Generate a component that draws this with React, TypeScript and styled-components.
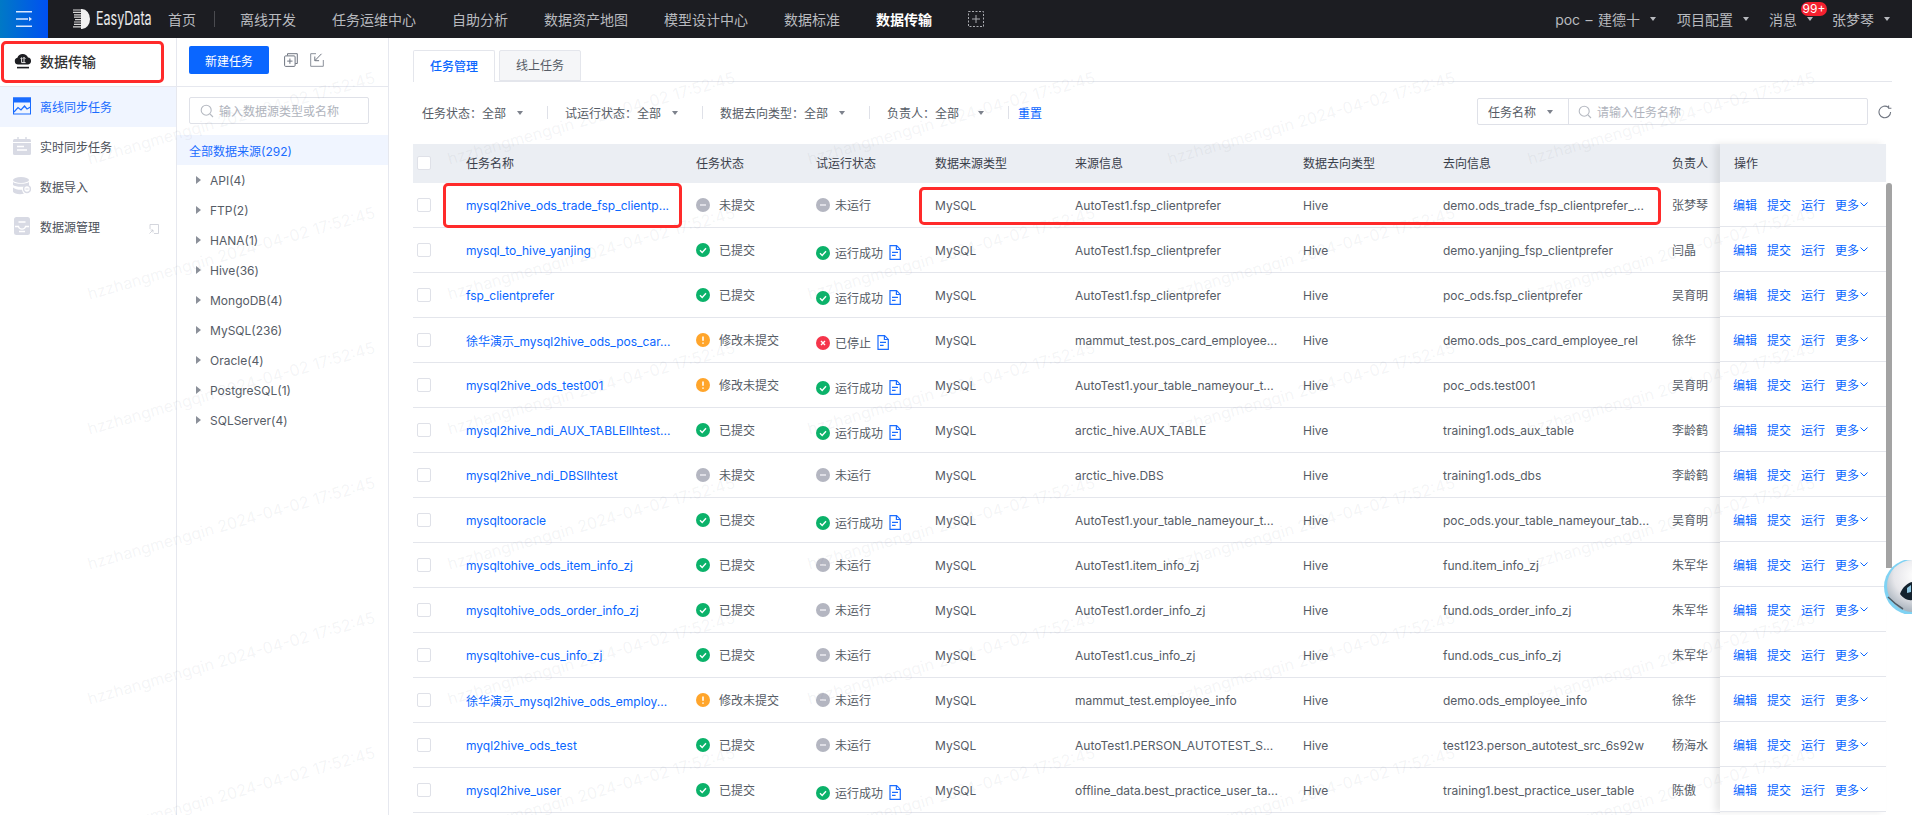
import styled, { createGlobalStyle } from "styled-components";

const GlobalStyle = createGlobalStyle`
  html, body {
    margin: 0;
    padding: 0;
    background: #fff;
    font-family: Inter, "Noto Sans CJK SC", sans-serif;
    font-size: 12px;
    color: #565c66;
  }
  * {
    box-sizing: border-box;
  }
`;

const Page = styled.div`
  position: relative;
  width: 100%;
  height: 100vh;
  overflow: hidden;
  display: flex;
  flex-direction: column;
`;

const TopBar = styled.header`
  position: relative;
  z-index: 3;
  flex: none;
  height: 38px;
  display: flex;
  align-items: center;
  background: #1c1d22;
  color: #b8babf;
  font-size: 14px;
`;

const MenuButton = styled.div`
  width: 48px;
  height: 38px;
  display: flex;
  align-items: center;
  justify-content: center;
  background: linear-gradient(90deg, #0079c6, #0050f2);
`;

const Logo = styled.div`
  width: 79px;
  margin-left: 25px;
  display: flex;
  align-items: center;
  gap: 6px;
`;

const LogoText = styled.span`
  display: inline-block;
  color: #e9e9ea;
  font-size: 19px;
  line-height: 38px;
  transform: scaleX(0.66);
  transform-origin: left center;
  white-space: nowrap;
`;

const NavItem = styled.span<{ $active?: boolean }>`
  margin-right: 36px;
  white-space: nowrap;
  color: ${(p) => (p.$active ? "#fff" : "#b8babf")};
  font-weight: ${(p) => (p.$active ? 700 : 400)};
`;

const HomeItem = styled(NavItem)`
  margin-left: 16px;
  margin-right: 18px;
`;

const NavDivider = styled.i`
  width: 1px;
  height: 16px;
  margin-right: 25px;
  background: #4a4b50;
`;

const RightMenu = styled.div`
  margin-left: auto;
  padding-right: 22px;
  display: flex;
  align-items: center;
`;

const MenuEntry = styled.div<{ $gap: number }>`
  position: relative;
  display: flex;
  align-items: center;
  gap: 10px;
  margin-right: ${(p) => p.$gap}px;
  white-space: nowrap;
`;

const ProjectName = styled.span`
  word-spacing: 1.5px;
`;

const Badge = styled.span`
  position: absolute;
  left: 32px;
  top: -7px;
  width: 26px;
  height: 14px;
  border-radius: 7px;
  background: #f5212f;
  color: #fff;
  font-size: 12px;
  line-height: 14px;
  text-align: center;
`;

const Caret = styled.i<{ $color?: string; $gap?: number }>`
  flex: none;
  display: inline-block;
  margin-left: ${(p) => p.$gap ?? 0}px;
  border-left: 3px solid transparent;
  border-right: 3px solid transparent;
  border-top: 4px solid ${(p) => p.$color ?? "#7d828c"};
`;

const Body = styled.div`
  flex: 1;
  min-height: 0;
  display: flex;
`;

const Sidebar = styled.aside`
  flex: none;
  width: 177px;
  border-right: 1px solid #e6e8ef;
`;

const SideHeader = styled.div`
  position: relative;
  height: 49px;
  padding: 0 0 2px 14px;
  display: flex;
  align-items: center;
  gap: 8px;
  border-bottom: 1px solid #e6e8ef;
  color: #333;
  font-size: 14px;
  font-weight: 500;
`;

const SideItem = styled.div<{ $active?: boolean }>`
  position: relative;
  height: 40px;
  padding: 0 0 2px 13px;
  display: flex;
  align-items: center;
  gap: 9px;
  background: ${(p) => (p.$active ? "#f0f5ff" : "transparent")};
  color: ${(p) => (p.$active ? "#1a6cff" : "#4b5059")};
`;

const ExpandMark = styled.svg`
  position: absolute;
  right: 17px;
  top: 17px;
`;

const Annotation = styled.div<{ $left: number; $top: number; $width: number; $height: number }>`
  position: absolute;
  z-index: 2;
  left: ${(p) => p.$left}px;
  top: ${(p) => p.$top}px;
  width: ${(p) => p.$width}px;
  height: ${(p) => p.$height}px;
  border: 3px solid #ff2a2a;
  border-radius: 5px;
  pointer-events: none;
`;

const SourcePanel = styled.section`
  flex: none;
  width: 212px;
  border-right: 1px solid #e6e8ef;
`;

const PanelToolbar = styled.div`
  height: 49px;
  padding: 0 0 0 12px;
  display: flex;
  align-items: center;
  gap: 15px;
  border-bottom: 1px solid #e6e8ef;
`;

const PrimaryButton = styled.button`
  width: 80px;
  height: 28px;
  margin-top: -4px;
  border: 0;
  border-radius: 2px;
  background: #0a66ff;
  color: #fff;
  font: inherit;
`;

const ToolIcon = styled.svg<{ $pull?: number }>`
  flex: none;
  margin-top: -5px;
  margin-left: ${(p) => p.$pull ?? 0}px;
`;

const PanelSearch = styled.div`
  width: 180px;
  height: 27px;
  margin: 10px 0 11px 12px;
  padding-left: 10px;
  display: flex;
  align-items: center;
  gap: 5px;
  border: 1px solid #dfe1e8;
  border-radius: 2px;
  color: #b0b4bd;
`;

const AllSources = styled.div`
  height: 30px;
  padding-left: 12px;
  display: flex;
  align-items: center;
  background: #f0f5ff;
  color: #1a6cff;
`;

const TreeRow = styled.div`
  height: 30px;
  padding-left: 19px;
  display: flex;
  align-items: center;
  gap: 9px;
  color: #565c66;
`;

const TreeArrow = styled.i`
  border-top: 4px solid transparent;
  border-bottom: 4px solid transparent;
  border-left: 5px solid #8b9099;
`;

const Main = styled.main`
  flex: 1;
  min-width: 0;
  padding: 12px 20px 0 24px;
`;

const Tabs = styled.div`
  height: 32px;
  display: flex;
  gap: 4px;
  border-bottom: 1px solid #e4e6ec;
`;

const Tab = styled.div<{ $active?: boolean }>`
  width: 82px;
  height: ${(p) => (p.$active ? 32 : 31)}px;
  padding-bottom: 2px;
  display: flex;
  align-items: center;
  justify-content: center;
  border: 1px solid #e4e6ec;
  border-bottom: ${(p) => (p.$active ? "0" : "1px solid #e4e6ec")};
  border-radius: 2px 2px 0 0;
  background: ${(p) => (p.$active ? "#fff" : "#f5f6f8")};
  color: ${(p) => (p.$active ? "#0a66ff" : "#565c66")};
  font-weight: ${(p) => (p.$active ? 500 : 400)};
`;

const FilterBar = styled.div`
  height: 27px;
  margin-top: 16px;
  padding-left: 9px;
  display: flex;
  align-items: center;
`;

const FilterItem = styled.div`
  display: flex;
  align-items: center;
  padding-top: 2px;
  white-space: nowrap;
`;

const FilterDivider = styled.i<{ $after?: number }>`
  width: 1px;
  height: 13px;
  margin: 2px ${(p) => p.$after ?? 17}px 0 24px;
  background: #dfe1e8;
`;

const ResetLink = styled.a`
  padding-top: 2px;
  color: #0a66ff;
`;

const SearchGroup = styled.div`
  margin-left: auto;
  height: 27px;
  width: 391px;
  display: flex;
  border: 1px solid #dfe1e8;
  border-radius: 2px;
`;

const SearchType = styled.div`
  width: 91px;
  padding-left: 10px;
  display: flex;
  align-items: center;
  gap: 11px;
  border-right: 1px solid #dfe1e8;
`;

const SearchInput = styled.div`
  flex: 1;
  padding-left: 9px;
  display: flex;
  align-items: center;
  gap: 5px;
  color: #b0b4bd;
`;

const RefreshIcon = styled.svg`
  flex: none;
  margin-left: 10px;
`;

const TableWrap = styled.div`
  margin-top: 19px;
  display: flex;
  align-items: flex-start;
`;

const DataTable = styled.div`
  flex: none;
  width: 1307px;
`;

const columns = "41px 230px 120px 119px 140px 228px 140px 229px 60px";

const HeadRow = styled.div`
  height: 39px;
  padding-bottom: 2px;
  display: grid;
  grid-template-columns: ${columns};
  align-items: center;
  background: #ebeef3;
  color: #3a404b;
`;

const Row = styled.div`
  position: relative;
  height: 45px;
  display: grid;
  grid-template-columns: ${columns};
  align-items: center;
  border-bottom: 1px solid #e4e6ec;
`;

const Cell = styled.div`
  padding-left: 12px;
  overflow: hidden;
  white-space: nowrap;
  text-overflow: ellipsis;
`;

const LinkCell = styled(Cell)`
  color: #0a66ff;
`;

const OwnerCell = styled(Cell)`
  padding-bottom: 2px;
`;

const CheckCell = styled.div`
  padding-left: 4px;
  display: flex;
  align-items: center;
`;

const Checkbox = styled.span`
  width: 14px;
  height: 14px;
  border: 1px solid #dfe1e8;
  border-radius: 2px;
  background: #fff;
`;

const StatusCell = styled(Cell)`
  display: flex;
  align-items: center;
  gap: 9px;
`;

const TrialCell = styled(Cell)<{ $shift: boolean }>`
  display: flex;
  align-items: center;
  gap: 5px;
  padding-top: ${(p) => (p.$shift ? 6 : 0)}px;
`;

const StatusLabel = styled.span`
  margin-top: -2px;
`;

const DocIcon = styled.svg`
  flex: none;
  margin: -2px 0 0 1px;
`;

const OpsColumn = styled.div`
  position: relative;
  flex: none;
  width: 166px;
  background: #fff;
  box-shadow: -5px 0 7px rgba(0, 0, 0, 0.09);
`;

const OpsHead = styled.div`
  height: 38px;
  padding: 0 0 2px 14px;
  display: flex;
  align-items: center;
  background: #ebeef3;
  color: #3a404b;
`;

const OpsRow = styled.div`
  height: 45px;
  padding-left: 13px;
  display: flex;
  align-items: center;
  gap: 10px;
  border-bottom: 1px solid #e4e6ec;
  color: #0a66ff;
`;

const MoreLink = styled.span`
  display: flex;
  align-items: center;
  gap: 1px;
`;

const ScrollGutter = styled.div`
  flex: none;
  width: 6px;
  padding-top: 39px;
`;

const ScrollThumb = styled.div`
  height: 385px;
  border-radius: 3px 3px 0 0;
  background: #a3a3a3;
`;

const Watermarks = styled.div`
  position: absolute;
  z-index: 1;
  left: 51px;
  top: 50px;
  display: grid;
  grid-template-columns: repeat(5, 360px);
  grid-auto-rows: 135px;
  pointer-events: none;
`;

const Watermark = styled.span`
  display: flex;
  align-items: center;
  justify-content: center;
  white-space: nowrap;
  font-size: 16px;
  color: rgba(110, 115, 130, 0.08);
  transform: rotate(-16deg);
`;

const Assistant = styled.svg`
  position: absolute;
  z-index: 4;
  right: 0;
  top: 560px;
`;

type TaskState = "none" | "ok" | "warn" | "stop";

const StatusIcon = ({ state }: { state: TaskState }) => {
  const fill = { none: "#b4b6c1", ok: "#0bb26a", warn: "#ffa52b", stop: "#f5354b" }[state];
  return (
    <svg width="14" height="14" viewBox="0 0 14 14" style={{ flex: "none" }}>
      <circle cx="7" cy="7" r="7" fill={fill} />
      {state === "ok" && <path d="M4 7.2l2.2 2.2L10 5.2" fill="none" stroke="#fff" strokeWidth="1.4" />}
      {state === "none" && <path d="M4 7h6" stroke="#e9e9ee" strokeWidth="1.6" />}
      {state === "warn" && <path d="M7 3.4v4.4M7 9.4v1.4" stroke="#fff" strokeWidth="1.6" />}
      {state === "stop" && <path d="M5 5l4 4M9 5l-4 4" stroke="#fff" strokeWidth="1.4" />}
    </svg>
  );
};

const Doc = () => (
  <DocIcon width="12" height="15" viewBox="0 0 12 15">
    <path d="M1 .7h6.6L11.3 4.4v9.9H1z" fill="none" stroke="#1a6cff" strokeWidth="1.2" />
    <path d="M7.4.7v3.8h3.9M3 7.4h6M3 10.4h3.6" fill="none" stroke="#1a6cff" strokeWidth="1.2" />
  </DocIcon>
);

const SearchGlass = () => (
  <svg width="14" height="14" viewBox="0 0 14 14" style={{ flex: "none" }}>
    <circle cx="6.2" cy="6.2" r="5" fill="none" stroke="#b6bac2" strokeWidth="1.1" />
    <path d="M10 10l3 3" stroke="#b6bac2" strokeWidth="1.1" />
  </svg>
);

const tree = ["API(4)", "FTP(2)", "HANA(1)", "Hive(36)", "MongoDB(4)", "MySQL(236)", "Oracle(4)", "PostgreSQL(1)", "SQLServer(4)"];

const heads = ["任务名称", "任务状态", "试运行状态", "数据来源类型", "来源信息", "数据去向类型", "去向信息", "负责人"];

const statusText: Record<string, string> = { none: "未提交", ok: "已提交", warn: "修改未提交" };
const trialText: Record<string, string> = { none: "未运行", ok: "运行成功", stop: "已停止" };

const tasks: [string, TaskState, TaskState, string, string, string][] = [
  ["mysql2hive_ods_trade_fsp_clientp...", "none", "none", "AutoTest1.fsp_clientprefer", "demo.ods_trade_fsp_clientprefer_...", "张梦琴"],
  ["mysql_to_hive_yanjing", "ok", "ok", "AutoTest1.fsp_clientprefer", "demo.yanjing_fsp_clientprefer", "闫晶"],
  ["fsp_clientprefer", "ok", "ok", "AutoTest1.fsp_clientprefer", "poc_ods.fsp_clientprefer", "吴育明"],
  ["徐华演示_mysql2hive_ods_pos_car...", "warn", "stop", "mammut_test.pos_card_employee...", "demo.ods_pos_card_employee_rel", "徐华"],
  ["mysql2hive_ods_test001", "warn", "ok", "AutoTest1.your_table_nameyour_t...", "poc_ods.test001", "吴育明"],
  ["mysql2hive_ndi_AUX_TABLEllhtest...", "ok", "ok", "arctic_hive.AUX_TABLE", "training1.ods_aux_table", "李龄鹤"],
  ["mysql2hive_ndi_DBSllhtest", "none", "none", "arctic_hive.DBS", "training1.ods_dbs", "李龄鹤"],
  ["mysqltooracle", "ok", "ok", "AutoTest1.your_table_nameyour_t...", "poc_ods.your_table_nameyour_tab...", "吴育明"],
  ["mysqltohive_ods_item_info_zj", "ok", "none", "AutoTest1.item_info_zj", "fund.item_info_zj", "朱军华"],
  ["mysqltohive_ods_order_info_zj", "ok", "none", "AutoTest1.order_info_zj", "fund.ods_order_info_zj", "朱军华"],
  ["mysqltohive-cus_info_zj", "ok", "none", "AutoTest1.cus_info_zj", "fund.ods_cus_info_zj", "朱军华"],
  ["徐华演示_mysql2hive_ods_employ...", "warn", "none", "mammut_test.employee_info", "demo.ods_employee_info", "徐华"],
  ["myql2hive_ods_test", "ok", "none", "AutoTest1.PERSON_AUTOTEST_S...", "test123.person_autotest_src_6s92w", "杨海水"],
  ["mysql2hive_user", "ok", "ok", "offline_data.best_practice_user_ta...", "training1.best_practice_user_table", "陈傲"],
];

const App = () => {
  return (
    <Page>
      <GlobalStyle />
      <TopBar>
        <MenuButton>
          <svg width="16" height="16" viewBox="0 0 16 16">
            <path d="M0 .7h16M0 8h12M0 15.3h16" stroke="#dbe8ff" strokeWidth="1.4" />
            <path d="M13 5.8l3 2.2-3 2.2z" fill="#dbe8ff" />
          </svg>
        </MenuButton>
        <Logo>
          <svg width="17" height="20" viewBox="0 0 17 20" style={{ flex: "none" }}>
            <path d="M8 0h1a8 10 0 0 1 0 20H8z" fill="#f1f1f1" />
            <path d="M0 1h8M0 3.4h8M1 5.8h7M1 8.2h7M2 10.6h6M1 13h7M1 15.4h7M0 17.8h8" stroke="#d9d9d9" strokeWidth="1.2" />
          </svg>
          <LogoText>EasyData</LogoText>
        </Logo>
        <HomeItem>首页</HomeItem>
        <NavDivider />
        <NavItem>离线开发</NavItem>
        <NavItem>任务运维中心</NavItem>
        <NavItem>自助分析</NavItem>
        <NavItem>数据资产地图</NavItem>
        <NavItem>模型设计中心</NavItem>
        <NavItem>数据标准</NavItem>
        <NavItem $active>数据传输</NavItem>
        <svg width="16" height="16" viewBox="0 0 16 16">
          <rect x=".5" y=".5" width="15" height="15" fill="none" stroke="#a9abb0" strokeDasharray="2 1.5" />
          <path d="M4 8h8M8 4v8" stroke="#a9abb0" />
        </svg>
        <RightMenu>
          <MenuEntry $gap={21}>
            <ProjectName>poc – 建德十</ProjectName>
            <Caret $color="#b8babf" />
          </MenuEntry>
          <MenuEntry $gap={20}>
            项目配置
            <Caret $color="#b8babf" />
          </MenuEntry>
          <MenuEntry $gap={19}>
            消息
            <Caret $color="#b8babf" />
            <Badge>99+</Badge>
          </MenuEntry>
          <MenuEntry $gap={0}>
            张梦琴
            <Caret $color="#b8babf" />
          </MenuEntry>
        </RightMenu>
      </TopBar>
      <Body>
        <Sidebar>
          <SideHeader>
            <svg width="18" height="16" viewBox="0 0 18 16">
              <path d="M4 11.5a3.4 3.4 0 0 1-.6-6.7A5.7 5.7 0 0 1 14 4.6a3.5 3.5 0 0 1 .2 6.9z" fill="#1d1e22" />
              <path d="M6.6 5.6l1-1v5M10 9.4V4.4M8.6 5.8L10 4.4l1.4 1.4M7.6 9.6h4" fill="none" stroke="#fff" strokeWidth=".9" />
              <path d="M3 14.6h12" stroke="#1d1e22" strokeWidth="1.6" />
            </svg>
            数据传输
            <Annotation $left={1} $top={3} $width={163} $height={42} />
          </SideHeader>
          <nav>
            <SideItem $active>
              <svg width="18" height="18" viewBox="0 0 18 18">
                <rect x=".5" y="1" width="17" height="16" fill="none" stroke="#1a6cff" />
                <rect x="0" y=".5" width="18" height="5" fill="#1a6cff" />
                <path d="M1 15l4-4.5 3 2.5 3.5-4 2.5 3 3.5-2" fill="none" stroke="#1a6cff" strokeWidth="1.2" />
              </svg>
              离线同步任务
            </SideItem>
            <SideItem>
              <svg width="18" height="18" viewBox="0 0 18 18">
                <path d="M5 0v3M13 0v3" stroke="#d8dae4" strokeWidth="1.4" />
                <rect x="0" y="2" width="18" height="16" rx="1.5" fill="#d8dae4" />
                <path d="M0 5.5h18" stroke="#fff" />
                <path d="M4 9.5h7M4 13h10" stroke="#fff" strokeWidth="1.4" />
              </svg>
              实时同步任务
            </SideItem>
            <SideItem>
              <svg width="18" height="18" viewBox="0 0 18 18">
                <ellipse cx="8" cy="3" rx="8" ry="3" fill="#d8dae4" />
                <path d="M0 5c2 2.4 14 2.4 16 0v3c-2 2.4-14 2.4-16 0zM0 10.5c2 2 6 2.4 9 2.2.3 1.6 1 3 2 4-4 1-10 .4-11-2z" fill="#d8dae4" />
                <circle cx="14" cy="12" r="3.4" fill="#fff" stroke="#d8dae4" strokeWidth="1.5" />
                <path d="M15.5 12h-3" stroke="#d8dae4" />
              </svg>
              数据导入
            </SideItem>
            <SideItem>
              <svg width="18" height="18" viewBox="0 0 18 18">
                <rect x="1" y="0" width="16" height="18" rx="2.5" fill="#d8dae4" />
                <path d="M5.5 5h7M2 9.5h3.5c.3 2 1.4 2.6 3.5 2.6s3.2-.6 3.5-2.6H16M6 14.5h6" fill="none" stroke="#fff" strokeWidth="1.3" />
              </svg>
              数据源管理
              <ExpandMark width="10" height="10" viewBox="0 0 10 10">
                <path d="M1 5V.5h8.5v9H5M.5 9.5L4 6M1.500 6H4v2.500" fill="none" stroke="#c9ccd4" strokeWidth=".8" />
              </ExpandMark>
            </SideItem>
          </nav>
        </Sidebar>
        <SourcePanel>
          <PanelToolbar>
            <PrimaryButton>新建任务</PrimaryButton>
            <ToolIcon width="14" height="14" viewBox="0 0 14 14">
              <path d="M3.5 2.5V.7h9.8v9.8h-2" fill="none" stroke="#6f7580" />
              <rect x=".6" y="2.9" width="10.5" height="10.5" rx="1" fill="none" stroke="#6f7580" />
              <path d="M3.2 8.1h5.3M5.9 5.5v5.300" stroke="#6f7580" />
            </ToolIcon>
            <ToolIcon $pull={-3} width="14" height="14" viewBox="0 0 14 14">
              <path d="M6 .7H.7v12.600h12.600V7" fill="none" stroke="#8b909a" />
              <path d="M11.500.8L5 7.500M4.800 3.500v4.200h4.300" fill="none" stroke="#6f7580" />
            </ToolIcon>
          </PanelToolbar>
          <PanelSearch>
            <SearchGlass />
            输入数据源类型或名称
          </PanelSearch>
          <AllSources>全部数据来源(292)</AllSources>
          {tree.map((name) => (
            <TreeRow key={name}>
              <TreeArrow />
              {name}
            </TreeRow>
          ))}
        </SourcePanel>
        <Main>
          <Tabs>
            <Tab $active>任务管理</Tab>
            <Tab>线上任务</Tab>
          </Tabs>
          <FilterBar>
            <FilterItem>
              任务状态：全部
              <Caret $gap={11} />
            </FilterItem>
            <FilterDivider />
            <FilterItem>
              试运行状态：全部
              <Caret $gap={11} />
            </FilterItem>
            <FilterDivider />
            <FilterItem>
              数据去向类型：全部
              <Caret $gap={11} />
            </FilterItem>
            <FilterDivider />
            <FilterItem>
              负责人：全部
              <Caret $gap={19} />
            </FilterItem>
            <FilterDivider $after={9} />
            <ResetLink>重置</ResetLink>
            <SearchGroup>
              <SearchType>
                任务名称
                <Caret />
              </SearchType>
              <SearchInput>
                <SearchGlass />
                请输入任务名称
              </SearchInput>
            </SearchGroup>
            <RefreshIcon width="14" height="14" viewBox="0 0 14 14">
              <path d="M12.600 7A5.800 5.800 0 1 1 10.500 2.500" fill="none" stroke="#6f7580" strokeWidth="1.100" />
              <path d="M10.600.5v2.800h2.800" fill="none" stroke="#6f7580" strokeWidth="1.100" />
            </RefreshIcon>
          </FilterBar>
          <TableWrap>
            <DataTable>
              <HeadRow>
                <CheckCell>
                  <Checkbox />
                </CheckCell>
                {heads.map((h) => (
                  <Cell key={h}>{h}</Cell>
                ))}
              </HeadRow>
              {tasks.map(([name, status, trial, source, target, owner], i) => (
                <Row key={name}>
                  <CheckCell>
                    <Checkbox />
                  </CheckCell>
                  <LinkCell>{name}</LinkCell>
                  <StatusCell>
                    <StatusIcon state={status} />
                    <StatusLabel>{statusText[status]}</StatusLabel>
                  </StatusCell>
                  <TrialCell $shift={trial !== "none"}>
                    <StatusIcon state={trial} />
                    <StatusLabel>{trialText[trial]}</StatusLabel>
                    {trial !== "none" && <Doc />}
                  </TrialCell>
                  <Cell>MySQL</Cell>
                  <Cell>{source}</Cell>
                  <Cell>Hive</Cell>
                  <Cell>{target}</Cell>
                  <OwnerCell>{owner}</OwnerCell>
                  {i === 0 && (
                    <>
                      <Annotation $left={30} $top={0} $width={239} $height={45} />
                      <Annotation $left={506} $top={4} $width={742} $height={38} />
                    </>
                  )}
                </Row>
              ))}
            </DataTable>
            <OpsColumn>
              <OpsHead>操作</OpsHead>
              {tasks.map(([name]) => (
                <OpsRow key={name}>
                  <span>编辑</span>
                  <span>提交</span>
                  <span>运行</span>
                  <MoreLink>
                    更多
                    <svg width="8" height="5" viewBox="0 0 8 5">
                      <path d="M.5.5L4 4 7.500.5" fill="none" stroke="#0a66ff" />
                    </svg>
                  </MoreLink>
                </OpsRow>
              ))}
            </OpsColumn>
            <ScrollGutter>
              <ScrollThumb />
            </ScrollGutter>
          </TableWrap>
        </Main>
      </Body>
      <Watermarks>
        {Array.from({ length: 30 }, (_, i) => (
          <Watermark key={i}>hzzhangmengqin 2024-04-02 17:52:45</Watermark>
        ))}
      </Watermarks>
      <Assistant width="29" height="54" viewBox="0 0 29 54">
        <defs>
          <radialGradient id="shell" cx="0.55" cy="0.3" r="0.7">
            <stop offset="0" stopColor="#ffffff" />
            <stop offset="0.6" stopColor="#e6e6ea" />
            <stop offset="1" stopColor="#a9b3bd" />
          </radialGradient>
        </defs>
        <circle cx="29" cy="27" r="28" fill="#7fd2f3" />
        <circle cx="30" cy="26" r="26" fill="url(#shell)" />
        <path d="M29 22c-5 1-10 6-12 12 3 4 8 7 12 6z" fill="#14222e" />
        <path d="M24 28l4-3v7l-4 1z" fill="#8fc7e2" />
        <path d="M5 37c4 4 10 9 15 12" fill="none" stroke="#4d5a64" strokeWidth="1.5" />
      </Assistant>
    </Page>
  );
};

export default App;
